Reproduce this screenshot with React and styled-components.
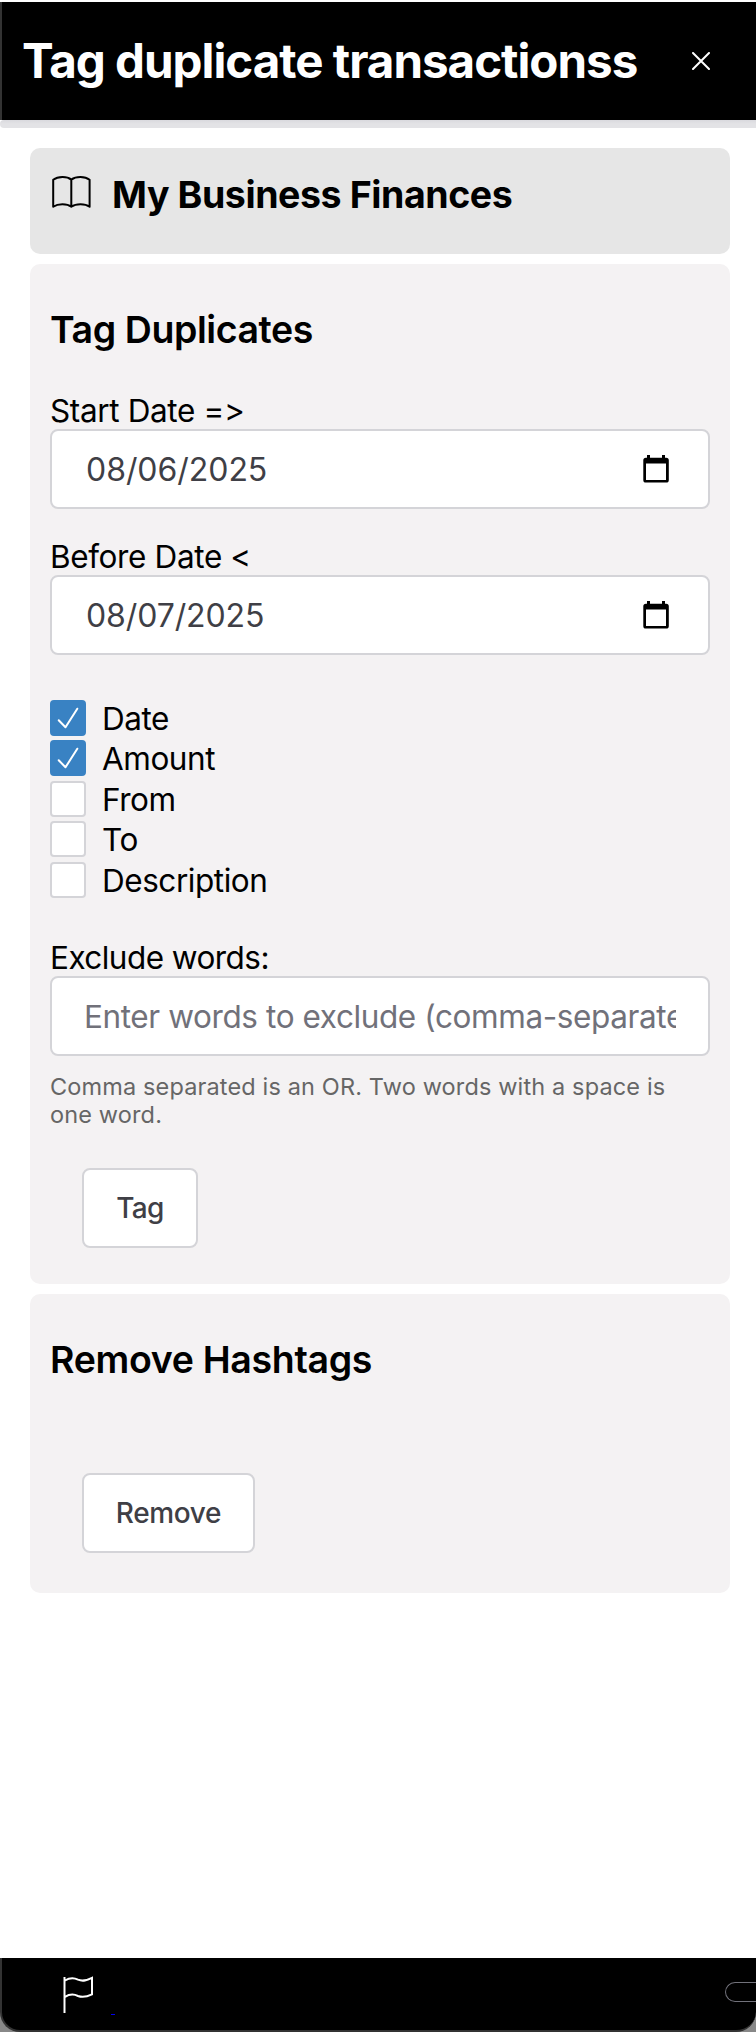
import React from "react";
import styled, { createGlobalStyle } from "styled-components";

const GlobalStyle = createGlobalStyle`
  * { box-sizing: border-box; }
  html, body { margin: 0; padding: 0; background: #fff; overflow: hidden; }
  body { font-family: Inter, "Liberation Sans", sans-serif; color: #000; }
  h1, h2, p { margin: 0; }
`;

const Page = styled.div`
  width: 756px;
  height: 2032px;
  padding-top: 2px;
  display: flex;
  flex-direction: column;
  overflow: hidden;
  background: #fff;
`;

const Header = styled.header`
  height: 118px;
  flex: none;
  display: flex;
  align-items: center;
  justify-content: space-between;
  padding: 0 46px 0 20px;
  background: #000;
  border-left: 2px solid #333;
  color: #fff;
`;

const Title = styled.h1`
  font-size: 47.5px;
  line-height: 60px;
  font-weight: 700;
  letter-spacing: -1px;
  white-space: nowrap;
`;

const CloseButton = styled.button`
  display: flex;
  border: 0;
  padding: 0;
  background: none;
  color: #fff;
`;

const HeaderShade = styled.div`
  height: 8px;
  flex: none;
  border-radius: 4px 0 0 4px;
  background: linear-gradient(#d9d9de, #e3e3e6 50%);
`;

const Content = styled.main`
  flex: 1;
  display: flex;
  flex-direction: column;
  gap: 10px;
  padding: 20px 26px 0 30px;
`;

const Banner = styled.section`
  height: 106px;
  display: flex;
  align-items: flex-start;
  gap: 19px;
  padding: 23px 21px;
  border-radius: 10px;
  background: #e6e6e6;
`;

const Card = styled.section`
  height: ${(p) => p.$height}px;
  display: flex;
  flex-direction: column;
  align-items: stretch;
  padding: 42px 20px 0;
  border-radius: 10px;
  background: #f4f2f3;
`;

const Heading = styled.h2`
  font-size: 37.5px;
  line-height: 48px;
  font-weight: ${(p) => p.$weight || 600};
  letter-spacing: ${(p) => p.$tracking}px;
  white-space: nowrap;
`;

const Field = styled.div`
  display: flex;
  flex-direction: column;
  margin-top: ${(p) => p.$gap}px;
`;

const Label = styled.label`
  height: 38px;
  font-size: 31.5px;
  line-height: 40px;
  letter-spacing: ${(p) => p.$tracking}px;
`;

const DateBox = styled.div`
  height: 80px;
  display: flex;
  align-items: center;
  justify-content: space-between;
  padding: 0 39px 0 34px;
  border: 2px solid #d4d4d8;
  border-radius: 8px;
  background: #fff;
  color: #3f3f46;
  font-size: 32px;
  letter-spacing: ${(p) => p.$tracking}px;
`;

const TextInput = styled.input`
  width: 100%;
  height: 80px;
  padding: 2px 32px 0;
  border: 2px solid #d4d4d8;
  border-radius: 8px;
  background: #fff;
  font: 400 31.5px Inter, sans-serif;
  letter-spacing: -0.4px;
  outline: none;
  &::placeholder { color: #71717a; opacity: 1; }
`;

const CheckList = styled.div`
  display: flex;
  flex-direction: column;
  gap: 4.45px;
  margin-top: 45px;
`;

const CheckRow = styled.label`
  height: 36px;
  display: flex;
  align-items: flex-start;
  gap: 16px;
  font-size: 31.5px;
  line-height: 38px;
  letter-spacing: -0.45px;
`;

const CheckBox = styled.span`
  width: 36px;
  height: 36px;
  display: flex;
  border-radius: 4px;
  border: 2px solid ${(p) => (p.$checked ? "#3982c3" : "#d4d4d8")};
  background: ${(p) => (p.$checked ? "#3982c3" : "#fff")};
`;

const Hint = styled.p`
  margin: 17px 0 -1px;
  font-size: 23.5px;
  line-height: 28px;
  color: #666;
  letter-spacing: 0.14px;
`;

const Button = styled.button`
  width: ${(p) => p.$width}px;
  height: 80px;
  margin: ${(p) => p.$top}px 0 0 32px;
  padding: 0;
  border: 2px solid #d4d4d8;
  border-radius: 8px;
  background: #fff;
  color: #3f3f46;
  font: 500 28px Inter, sans-serif;
  letter-spacing: ${(p) => p.$tracking}px;
`;

const FooterFrame = styled.div`
  height: 74px;
  flex: none;
  background: linear-gradient(#fff 40%, #888 40%);
`;

const Footer = styled.footer`
  height: 74px;
  display: flex;
  align-items: flex-start;
  justify-content: space-between;
  padding-left: 60px;
  overflow: hidden;
  background: #000;
  border: solid #333;
  border-width: 0 0 2px 2px;
  border-radius: 0 0 20px 20px;
`;

const FooterLeft = styled.div`
  display: flex;
  align-items: flex-start;
  gap: 17px;
  padding-top: 18px;
`;

const BlueMark = styled.span`
  width: 4px;
  height: 1px;
  margin-top: 38px;
  background: #0000ee;
`;

const Pill = styled.span`
  width: 31px;
  height: 20px;
  margin-top: 24px;
  border: 1px solid #71717a;
  border-right: 0;
  border-radius: 10px 0 0 10px;
`;

const BookIcon = () => (
  <svg width="42" height="38" viewBox="0 0 42 38" fill="none" stroke="#000" strokeWidth="2" strokeLinejoin="round" strokeLinecap="round">
    <path d="M20.3 8.6C16 5.2 7 5.2 2.2 8.8V35.8C7 32.5 16 32.5 20.3 35.8C25 32.5 34 32.5 38.6 35.8V8.8C34 5.2 25 5.2 20.3 8.6V35.5" />
  </svg>
);

const CalendarIcon = () => (
  <svg width="26" height="29" viewBox="0 0 26 29">
    <path fill="#000" fillRule="evenodd" d="M4 0h3v2.7h12V0h3v2.7h1.2A2.6 2.6 0 0 1 25.8 5.3v19.6a2.6 2.6 0 0 1-2.6 2.6H2.9A2.6 2.6 0 0 1 .3 24.9V5.3A2.6 2.6 0 0 1 2.9 2.7H4zM3 8.5v16.5h20V8.5z" />
  </svg>
);

const CheckIcon = () => (
  <svg width="32" height="32" viewBox="0 0 32 32" fill="none" stroke="#fff" strokeWidth="2" strokeLinecap="round" strokeLinejoin="round">
    <path d="M6.7 18.2L13.5 25.3L25.3 6.7" />
  </svg>
);

const FlagIcon = () => (
  <svg width="32" height="38" viewBox="0 0 32 38" fill="none" stroke="#fff" strokeWidth="2">
    <path d="M2.5 1v36M3 4.5C7 2 12 1.6 16 3.6C21 5.8 25 4.2 30 1.8V18.4C25 20.8 21 22 16 20C12 18 7 18.4 3 20.9" />
  </svg>
);

const checks = [
  { name: "Date", checked: true },
  { name: "Amount", checked: true },
  { name: "From", checked: false },
  { name: "To", checked: false },
  { name: "Description", checked: false },
];

export default function App() {
  return (
    <Page>
      <GlobalStyle />
      <Header>
        <Title>Tag duplicate transactionss</Title>
        <CloseButton aria-label="Close">
          <svg width="18" height="18" viewBox="0 0 18 18" stroke="currentColor" strokeWidth="2" strokeLinecap="round">
            <path d="M1 1l16 16M17 1L1 17" />
          </svg>
        </CloseButton>
      </Header>
      <HeaderShade />
      <Content>
        <Banner>
          <BookIcon />
          <Heading $weight={700} $tracking={-0.42}>My Business Finances</Heading>
        </Banner>
        <Card $height={1020}>
          <Heading $tracking={-0.43}>Tag Duplicates</Heading>
          <Field $gap={37}>
            <Label $tracking={-0.37}>Start Date =&gt;</Label>
            <DateBox $tracking={-0.05}>08/06/2025<CalendarIcon /></DateBox>
          </Field>
          <Field $gap={28}>
            <Label $tracking={-0.37}>Before Date &lt;</Label>
            <DateBox $tracking={-0.1}>08/07/2025<CalendarIcon /></DateBox>
          </Field>
          <CheckList>
            {checks.map((c) => (
              <CheckRow key={c.name}>
                <CheckBox $checked={c.checked}>{c.checked && <CheckIcon />}</CheckBox>
                {c.name}
              </CheckRow>
            ))}
          </CheckList>
          <Field $gap={40}>
            <Label $tracking={-0.55}>Exclude words:</Label>
            <TextInput placeholder="Enter words to exclude (comma-separated)" />
          </Field>
          <Hint>Comma separated is an OR. Two words with a space is one word.</Hint>
          <Button $width={116} $top={40} $tracking={-0.6}>Tag</Button>
        </Card>
        <Card $height={299}>
          <Heading $tracking={-0.33}>Remove Hashtags</Heading>
          <Button $width={173} $top={89} $tracking={-0.35}>Remove</Button>
        </Card>
      </Content>
      <FooterFrame>
        <Footer>
          <FooterLeft>
            <FlagIcon />
            <BlueMark />
          </FooterLeft>
          <Pill />
        </Footer>
      </FooterFrame>
    </Page>
  );
}
